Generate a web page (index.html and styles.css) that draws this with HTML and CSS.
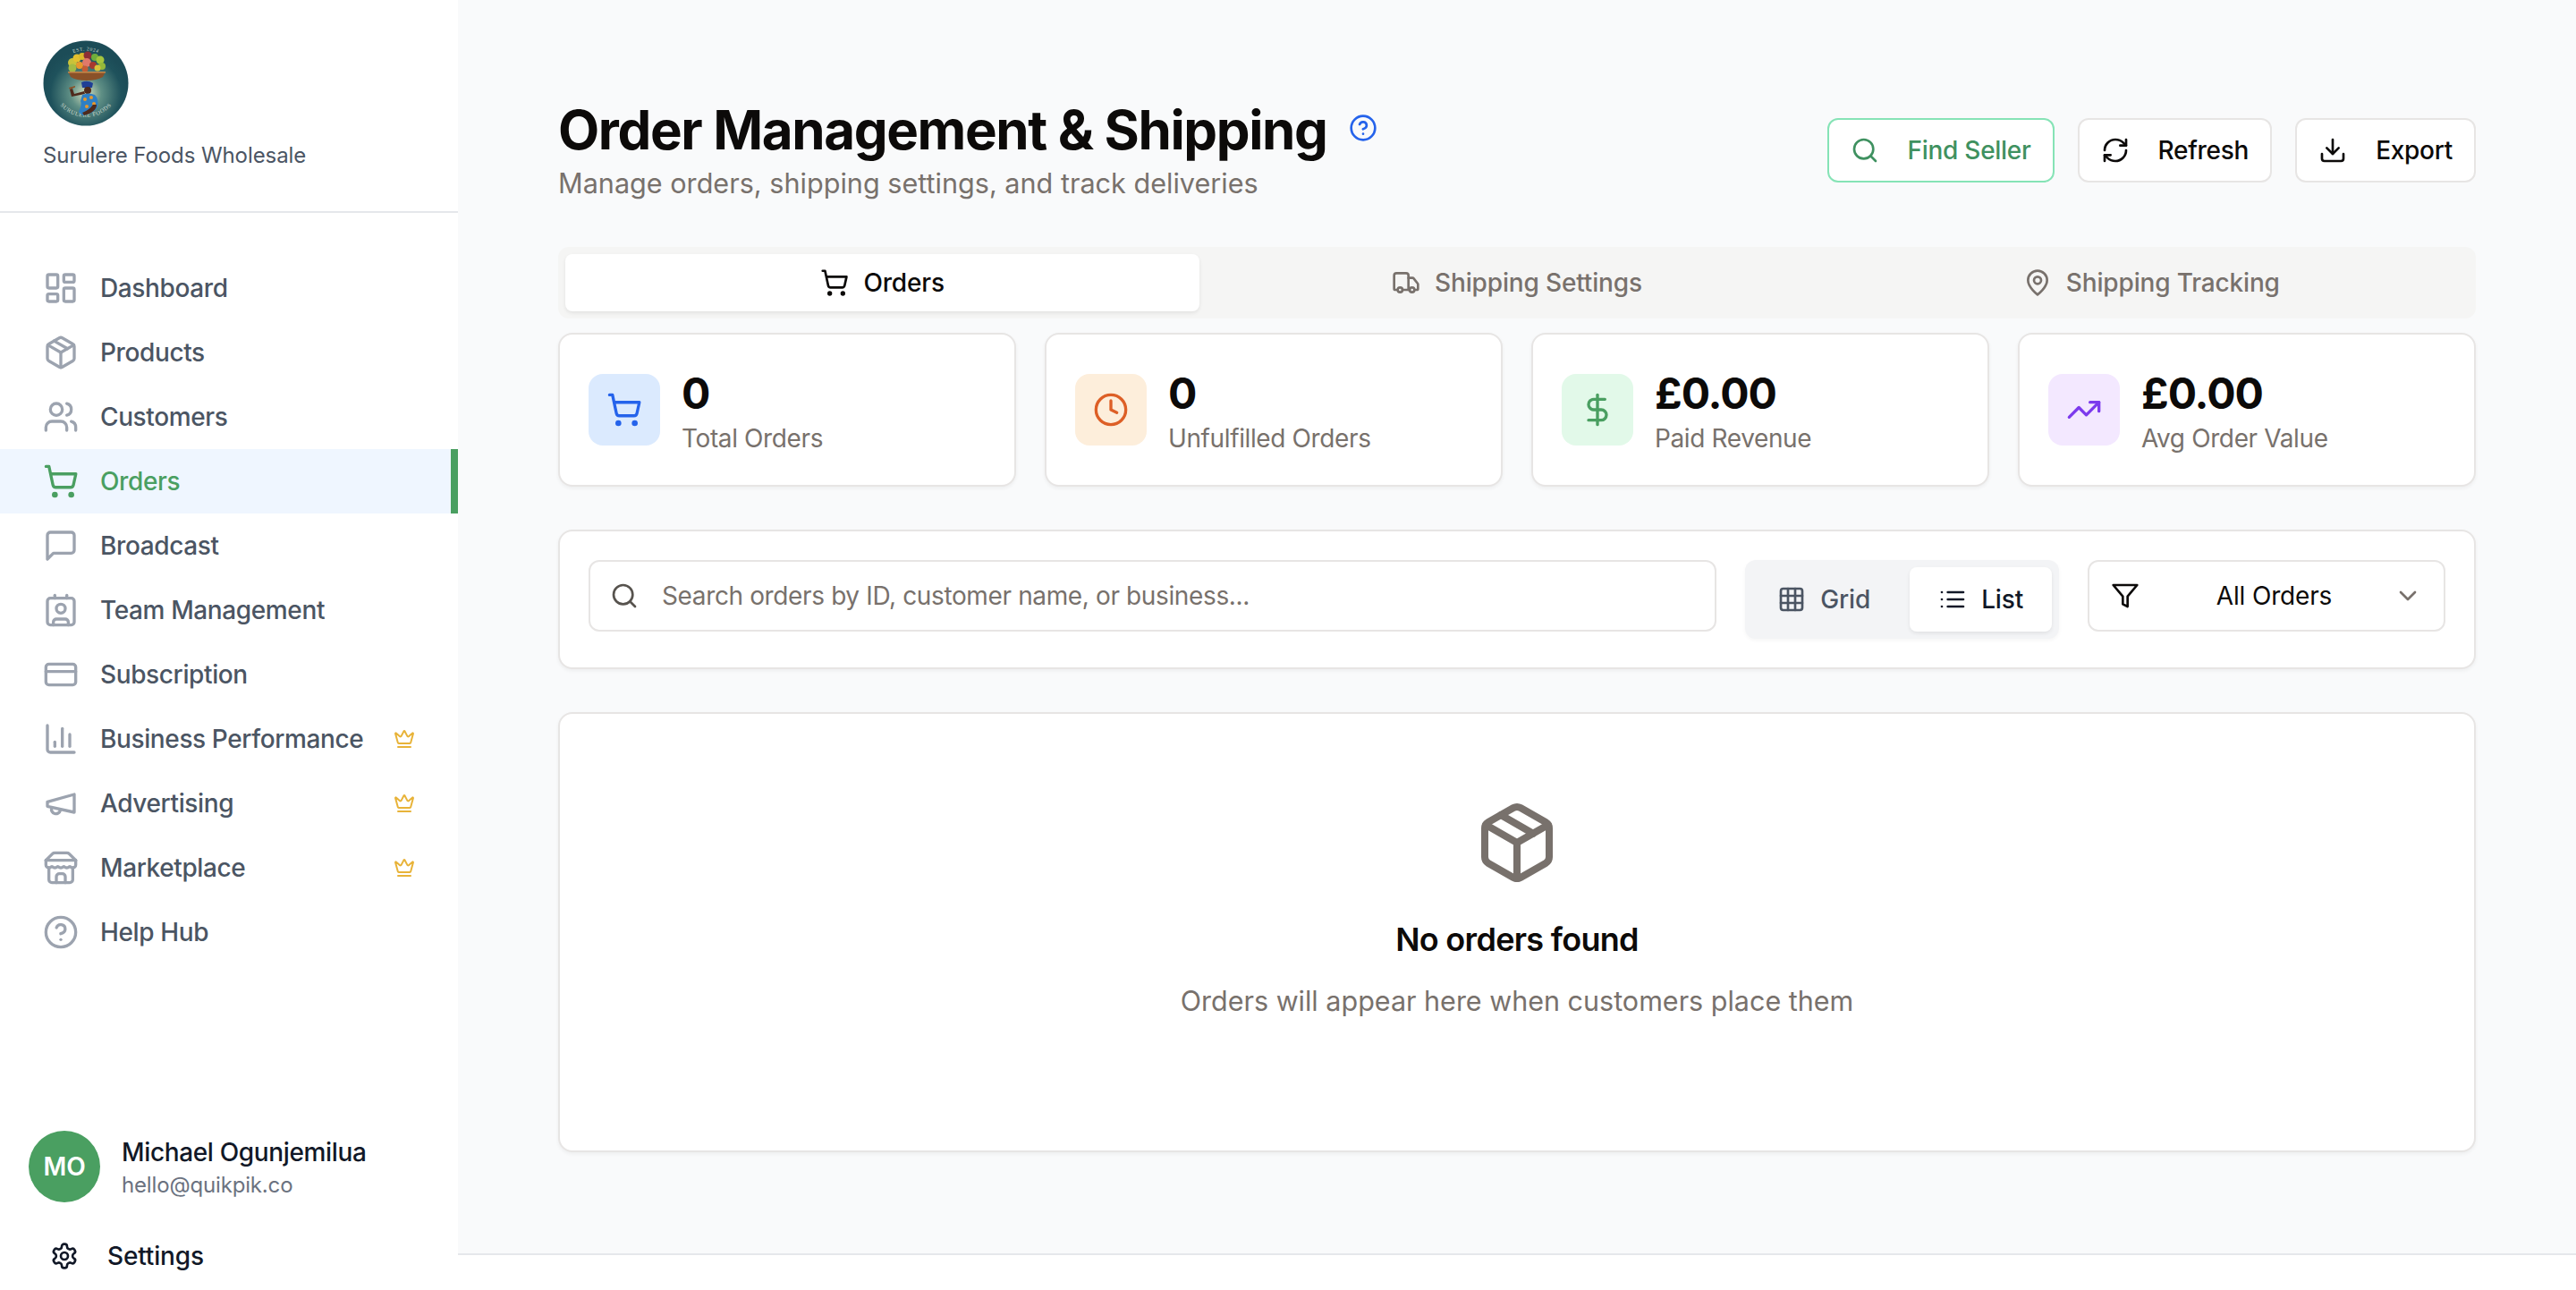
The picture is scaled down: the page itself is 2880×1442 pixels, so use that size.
FILE: index.html
```html
<!DOCTYPE html>
<html lang="en">
<head>
    <meta charset="UTF-8">
    <meta name="viewport" content="width=device-width, initial-scale=1.0">
    <title>Order Management &amp; Shipping</title>
    <link rel="stylesheet" href="styles.css">
</head>
<body>
    <!-- icon sprite -->
    <svg class="sprite" xmlns="http://www.w3.org/2000/svg">
        <symbol id="i-dashboard" viewBox="0 0 24 24"><rect x="3" y="3" width="7" height="9" rx="1"/><rect x="14" y="3" width="7" height="5" rx="1"/><rect x="14" y="12" width="7" height="9" rx="1"/><rect x="3" y="16" width="7" height="5" rx="1"/></symbol>
        <symbol id="i-package" viewBox="0 0 24 24"><path d="M11 21.73a2 2 0 0 0 2 0l7-4A2 2 0 0 0 21 16V8a2 2 0 0 0-1-1.73l-7-4a2 2 0 0 0-2 0l-7 4A2 2 0 0 0 3 8v8a2 2 0 0 0 1 1.73z"/><path d="M12 22V12"/><polyline points="3.29 7 12 12 20.71 7"/><path d="m7.5 4.27 9 5.15"/></symbol>
        <symbol id="i-users" viewBox="0 0 24 24"><path d="M16 21v-2a4 4 0 0 0-4-4H6a4 4 0 0 0-4 4v2"/><circle cx="9" cy="7" r="4"/><path d="M22 21v-2a4 4 0 0 0-3-3.87"/><path d="M16 3.13a4 4 0 0 1 0 7.75"/></symbol>
        <symbol id="i-cart" viewBox="0 0 24 24"><circle cx="8" cy="21" r="1"/><circle cx="19" cy="21" r="1"/><path d="M2.05 2.05h2l2.66 12.42a2 2 0 0 0 2 1.58h9.78a2 2 0 0 0 1.95-1.57l1.65-7.43H5.12"/></symbol>
        <symbol id="i-message" viewBox="0 0 24 24"><path d="M21 15a2 2 0 0 1-2 2H7l-4 4V5a2 2 0 0 1 2-2h14a2 2 0 0 1 2 2z"/></symbol>
        <symbol id="i-contact" viewBox="0 0 24 24"><path d="M16 2v2"/><path d="M7 22v-2a2 2 0 0 1 2-2h6a2 2 0 0 1 2 2v2"/><path d="M8 2v2"/><circle cx="12" cy="11" r="3"/><rect x="3" y="4" width="18" height="18" rx="2"/></symbol>
        <symbol id="i-card" viewBox="0 0 24 24"><rect x="2" y="5" width="20" height="14" rx="2"/><line x1="2" y1="10" x2="22" y2="10"/></symbol>
        <symbol id="i-chart" viewBox="0 0 24 24"><path d="M3 3v16a2 2 0 0 0 2 2h16"/><path d="M18 17V9"/><path d="M13 17V5"/><path d="M8 17v-3"/></symbol>
        <symbol id="i-megaphone" viewBox="0 0 24 24"><path d="m3 11 18-5v12L3 14v-3z"/><path d="M11.6 16.8a3 3 0 1 1-5.8-1.6"/></symbol>
        <symbol id="i-store" viewBox="0 0 24 24"><path d="m2 7 4.41-4.41A2 2 0 0 1 7.83 2h8.34a2 2 0 0 1 1.42.59L22 7"/><path d="M4 12v8a2 2 0 0 0 2 2h12a2 2 0 0 0 2-2v-8"/><path d="M15 22v-4a2 2 0 0 0-2-2h-2a2 2 0 0 0-2 2v4"/><path d="M2 7h20"/><path d="M22 7v3a2 2 0 0 1-2 2a2.7 2.7 0 0 1-1.59-.63.7.7 0 0 0-.82 0A2.7 2.7 0 0 1 16 12a2.7 2.7 0 0 1-1.59-.63.7.7 0 0 0-.82 0A2.7 2.7 0 0 1 12 12a2.7 2.7 0 0 1-1.59-.63.7.7 0 0 0-.82 0A2.7 2.7 0 0 1 8 12a2.7 2.7 0 0 1-1.59-.63.7.7 0 0 0-.82 0A2.7 2.7 0 0 1 4 12a2 2 0 0 1-2-2V7"/></symbol>
        <symbol id="i-help" viewBox="0 0 24 24"><circle cx="12" cy="12" r="10"/><path d="M9.09 9a3 3 0 0 1 5.83 1c0 2-3 3-3 3"/><path d="M12 17h.01"/></symbol>
        <symbol id="i-crown" viewBox="0 0 24 24"><path d="M11.562 3.266a.5.5 0 0 1 .876 0L15.39 8.87a1 1 0 0 0 1.516.294L21.183 5.5a.5.5 0 0 1 .798.519l-2.834 10.246a1 1 0 0 1-.956.734H5.81a1 1 0 0 1-.957-.734L2.02 6.02a.5.5 0 0 1 .798-.519l4.276 3.664a1 1 0 0 0 1.516-.294z"/><path d="M5 21h14"/></symbol>
        <symbol id="i-settings" viewBox="0 0 24 24"><path d="M12.22 2h-.44a2 2 0 0 0-2 2v.18a2 2 0 0 1-1 1.73l-.43.25a2 2 0 0 1-2 0l-.15-.08a2 2 0 0 0-2.73.73l-.22.38a2 2 0 0 0 .73 2.73l.15.1a2 2 0 0 1 1 1.72v.51a2 2 0 0 1-1 1.74l-.15.09a2 2 0 0 0-.73 2.73l.22.38a2 2 0 0 0 2.73.73l.15-.08a2 2 0 0 1 2 0l.43.25a2 2 0 0 1 1 1.73V20a2 2 0 0 0 2 2h.44a2 2 0 0 0 2-2v-.18a2 2 0 0 1 1-1.73l.43-.25a2 2 0 0 1 2 0l.15.08a2 2 0 0 0 2.73-.73l.22-.39a2 2 0 0 0-.73-2.73l-.15-.08a2 2 0 0 1-1-1.74v-.5a2 2 0 0 1 1-1.74l.15-.09a2 2 0 0 0 .73-2.73l-.22-.38a2 2 0 0 0-2.73-.73l-.15.08a2 2 0 0 1-2 0l-.43-.25a2 2 0 0 1-1-1.73V4a2 2 0 0 0-2-2z"/><circle cx="12" cy="12" r="3"/></symbol>
        <symbol id="i-truck" viewBox="0 0 24 24"><path d="M14 18V6a2 2 0 0 0-2-2H4a2 2 0 0 0-2 2v11a1 1 0 0 0 1 1h2"/><path d="M15 18H9"/><path d="M19 18h2a1 1 0 0 0 1-1v-3.65a1 1 0 0 0-.22-.624l-3.48-4.35A1 1 0 0 0 17.52 8H14"/><circle cx="17" cy="18" r="2"/><circle cx="7" cy="18" r="2"/></symbol>
        <symbol id="i-pin" viewBox="0 0 24 24"><path d="M20 10c0 6-8 12-8 12s-8-6-8-12a8 8 0 0 1 16 0Z"/><circle cx="12" cy="10" r="3"/></symbol>
        <symbol id="i-search" viewBox="0 0 24 24"><circle cx="11" cy="11" r="8"/><path d="m21 21-4.3-4.3"/></symbol>
        <symbol id="i-refresh" viewBox="0 0 24 24"><path d="M3 12a9 9 0 0 1 9-9 9.75 9.75 0 0 1 6.74 2.74L21 8"/><path d="M21 3v5h-5"/><path d="M21 12a9 9 0 0 1-9 9 9.75 9.75 0 0 1-6.74-2.74L3 16"/><path d="M8 16H3v5"/></symbol>
        <symbol id="i-download" viewBox="0 0 24 24"><path d="M21 15v4a2 2 0 0 1-2 2H5a2 2 0 0 1-2-2v-4"/><polyline points="7 10 12 15 17 10"/><line x1="12" y1="15" x2="12" y2="3"/></symbol>
        <symbol id="i-clock" viewBox="0 0 24 24"><circle cx="12" cy="12" r="10"/><polyline points="12 6 12 12 16 14"/></symbol>
        <symbol id="i-dollar" viewBox="0 0 24 24"><line x1="12" y1="2" x2="12" y2="22"/><path d="M17 5H9.5a3.5 3.5 0 0 0 0 7h5a3.5 3.5 0 0 1 0 7H6"/></symbol>
        <symbol id="i-trending" viewBox="0 0 24 24"><polyline points="22 7 13.5 15.5 8.5 10.5 2 17"/><polyline points="16 7 22 7 22 13"/></symbol>
        <symbol id="i-grid" viewBox="0 0 24 24"><rect x="3" y="3" width="18" height="18" rx="2"/><path d="M3 9h18"/><path d="M3 15h18"/><path d="M9 3v18"/><path d="M15 3v18"/></symbol>
        <symbol id="i-list" viewBox="0 0 24 24"><path d="M3 12h.01"/><path d="M3 18h.01"/><path d="M3 6h.01"/><path d="M8 12h13"/><path d="M8 18h13"/><path d="M8 6h13"/></symbol>
        <symbol id="i-filter" viewBox="0 0 24 24"><polygon points="22 3 2 3 10 12.46 10 19 14 21 14 12.46 22 3"/></symbol>
        <symbol id="i-chevron" viewBox="0 0 24 24"><path d="m6 9 6 6 6-6"/></symbol>
    </svg>

    <aside class="sidebar">
        <div class="brand">
            <!-- store logo, redrawn by hand -->
            <svg class="brand-logo" viewBox="0 0 96 96" xmlns="http://www.w3.org/2000/svg">
                <defs>
                    <radialGradient id="logoBg" cx="50%" cy="62%" r="52%">
                        <stop offset="0" stop-color="#d5dfc0"/>
                        <stop offset="0.35" stop-color="#5f8f85"/>
                        <stop offset="0.8" stop-color="#1f525c"/>
                        <stop offset="1" stop-color="#1c4c57"/>
                    </radialGradient>
                    <path id="logoTop" d="M22 24 A33 33 0 0 1 74 24"/>
                    <path id="logoBottom" d="M12 60 A38 38 0 0 0 84 60"/>
                </defs>
                <circle cx="48" cy="48" r="47.5" fill="url(#logoBg)"/>
                <text class="logo-text logo-text-top"><textPath href="#logoTop" startOffset="50%" text-anchor="middle">EST. 2024</textPath></text>
                <text class="logo-text"><textPath href="#logoBottom" startOffset="50%" text-anchor="middle">SURULERE FOODS</textPath></text>
                <circle cx="33" cy="25" r="5" fill="#c9c23a"/>
                <circle cx="38" cy="20" r="4.5" fill="#e3c02f"/>
                <circle cx="44" cy="18" r="4" fill="#d9b92a"/>
                <circle cx="50" cy="17" r="4.5" fill="#8d2f35"/>
                <circle cx="58" cy="19" r="4" fill="#6fae3c"/>
                <circle cx="64" cy="22" r="4.5" fill="#a5c53e"/>
                <circle cx="66" cy="29" r="4" fill="#94b83a"/>
                <circle cx="33" cy="31" r="4.5" fill="#a3bb45"/>
                <circle cx="41" cy="28" r="4" fill="#e8982b"/>
                <circle cx="49" cy="25" r="5" fill="#e0796a"/>
                <circle cx="56" cy="28" r="4" fill="#a8372f"/>
                <circle cx="61" cy="31" r="3.5" fill="#d9c23a"/>
                <circle cx="47" cy="32" r="3.5" fill="#c65c35"/>
                <path d="M28 35 H70 L67 41 Q60 45 49 45 Q37 45 31 41Z" fill="#8a5128"/>
                <path d="M28 35 H70 V36.5 H28Z" fill="#c58a4b"/>
                <path d="M43 47 Q50 44 56 48 L55 53 H44Z" fill="#1f3f96"/>
                <circle cx="50" cy="56" r="4" fill="#4f2a1c"/>
                <path d="M47 60 L32 63 L30 55 L33 54 L35 60 L46 57Z" fill="#4f2a1c"/>
                <path d="M29 53 L36 51 L36 52.5 L30 55Z" fill="#8a5128"/>
                <path d="M44 61 Q51 58 58 61 Q63 66 61 75 Q57 82 44 84 L40 80 Q44 72 42 68Z" fill="#2f7fc4"/>
                <circle cx="47" cy="66" r="2" fill="#e8982b"/>
                <circle cx="54" cy="64" r="2" fill="#e8982b"/>
                <circle cx="57" cy="71" r="2" fill="#e8982b"/>
                <circle cx="49" cy="74" r="2" fill="#e8982b"/>
                <path d="M60 72 Q60 80 46 84 L44 81 Q52 78 56 72Z" fill="#4f2a1c"/>
            </svg>
            <p class="brand-name">Surulere Foods Wholesale</p>
        </div>

        <nav class="nav">
            <a class="nav-item"><svg class="icon nav-icon"><use href="#i-dashboard"/></svg><span class="nav-label">Dashboard</span></a>
            <a class="nav-item"><svg class="icon nav-icon"><use href="#i-package"/></svg><span class="nav-label">Products</span></a>
            <a class="nav-item"><svg class="icon nav-icon"><use href="#i-users"/></svg><span class="nav-label">Customers</span></a>
            <a class="nav-item active"><svg class="icon nav-icon"><use href="#i-cart"/></svg><span class="nav-label">Orders</span></a>
            <a class="nav-item"><svg class="icon nav-icon"><use href="#i-message"/></svg><span class="nav-label">Broadcast</span></a>
            <a class="nav-item"><svg class="icon nav-icon"><use href="#i-contact"/></svg><span class="nav-label">Team Management</span></a>
            <a class="nav-item"><svg class="icon nav-icon"><use href="#i-card"/></svg><span class="nav-label">Subscription</span></a>
            <a class="nav-item"><svg class="icon nav-icon"><use href="#i-chart"/></svg><span class="nav-label">Business Performance</span><svg class="icon crown"><use href="#i-crown"/></svg></a>
            <a class="nav-item"><svg class="icon nav-icon"><use href="#i-megaphone"/></svg><span class="nav-label">Advertising</span><svg class="icon crown"><use href="#i-crown"/></svg></a>
            <a class="nav-item"><svg class="icon nav-icon"><use href="#i-store"/></svg><span class="nav-label">Marketplace</span><svg class="icon crown"><use href="#i-crown"/></svg></a>
            <a class="nav-item"><svg class="icon nav-icon"><use href="#i-help"/></svg><span class="nav-label">Help Hub</span></a>
        </nav>

        <div class="account">
            <div class="user">
                <div class="avatar">MO</div>
                <div>
                    <div class="user-name">Michael Ogunjemilua</div>
                    <div class="user-email">hello@quikpik.co</div>
                </div>
            </div>
            <a class="settings"><svg class="icon settings-icon"><use href="#i-settings"/></svg>Settings</a>
        </div>
    </aside>

    <div class="main">
        <main class="content">
            <header class="page-head">
                <div>
                    <div class="title-row">
                        <h1 class="title">Order Management &amp; Shipping</h1>
                        <svg class="icon title-help"><use href="#i-help"/></svg>
                    </div>
                    <p class="subtitle">Manage orders, shipping settings, and track deliveries</p>
                </div>
                <div class="head-actions">
                    <button class="btn btn-green"><svg class="icon"><use href="#i-search"/></svg>Find Seller</button>
                    <button class="btn"><svg class="icon"><use href="#i-refresh"/></svg>Refresh</button>
                    <button class="btn"><svg class="icon"><use href="#i-download"/></svg>Export</button>
                </div>
            </header>

            <div class="tabs">
                <div class="tab active"><svg class="icon"><use href="#i-cart"/></svg>Orders</div>
                <div class="tab"><svg class="icon"><use href="#i-truck"/></svg>Shipping Settings</div>
                <div class="tab"><svg class="icon"><use href="#i-pin"/></svg>Shipping Tracking</div>
            </div>

            <section class="stats">
                <div class="panel stat">
                    <div class="stat-icon blue"><svg class="icon"><use href="#i-cart"/></svg></div>
                    <div><div class="stat-value">0</div><div class="stat-label">Total Orders</div></div>
                </div>
                <div class="panel stat">
                    <div class="stat-icon orange"><svg class="icon"><use href="#i-clock"/></svg></div>
                    <div><div class="stat-value">0</div><div class="stat-label">Unfulfilled Orders</div></div>
                </div>
                <div class="panel stat">
                    <div class="stat-icon green"><svg class="icon"><use href="#i-dollar"/></svg></div>
                    <div><div class="stat-value">£0.00</div><div class="stat-label">Paid Revenue</div></div>
                </div>
                <div class="panel stat">
                    <div class="stat-icon purple"><svg class="icon"><use href="#i-trending"/></svg></div>
                    <div><div class="stat-value">£0.00</div><div class="stat-label">Avg Order Value</div></div>
                </div>
            </section>

            <section class="panel toolbar">
                <div class="search">
                    <svg class="icon search-icon"><use href="#i-search"/></svg>
                    <span class="search-text">Search orders by ID, customer name, or business...</span>
                </div>
                <div class="view-toggle">
                    <div class="view-btn"><svg class="icon"><use href="#i-grid"/></svg>Grid</div>
                    <div class="view-btn active"><svg class="icon"><use href="#i-list"/></svg>List</div>
                </div>
                <div class="select">
                    <svg class="icon"><use href="#i-filter"/></svg>
                    <span class="select-text">All Orders</span>
                    <svg class="icon select-chevron"><use href="#i-chevron"/></svg>
                </div>
            </section>

            <section class="panel empty">
                <svg class="icon empty-icon"><use href="#i-package"/></svg>
                <h2 class="empty-title">No orders found</h2>
                <p class="empty-text">Orders will appear here when customers place them</p>
            </section>
        </main>
        <footer class="page-foot"></footer>
    </div>
</body>
</html>
```

FILE: styles.css
```css
* {
    box-sizing: border-box;
}
html, body {
    height: 100%;
}
body {
    margin: 0;
    display: flex;
    overflow: hidden;
    font-family: Inter, "Noto Sans", sans-serif;
    letter-spacing: -0.01em;
    background: #f9fafb;
    color: #0c0a09;
}
p, h1, h2 {
    margin: 0;
}
.sprite {
    display: none;
}
.icon {
    width: 32px;
    height: 32px;
    flex: none;
    fill: none;
    stroke: currentColor;
    stroke-width: 2;
    stroke-linecap: round;
    stroke-linejoin: round;
}

/* sidebar */
.sidebar {
    width: 512px;
    flex: none;
    display: flex;
    flex-direction: column;
    background: #fff;
}
.brand {
    height: 238px;
    padding: 45px 48px 0;
    border-bottom: 2px solid #e5e7eb;
}
.brand-logo {
    display: block;
    width: 96px;
    height: 96px;
}
.brand-name {
    margin-top: 17px;
    font-size: 24px;
    line-height: 32px;
    letter-spacing: -0.08px;
    color: #4b5563;
}
.logo-text {
    font-family: "Liberation Serif", serif;
    font-size: 6.5px;
    letter-spacing: 0.6px;
    fill: #cfdcd0;
}
.logo-text-top {
    font-size: 5.5px;
}
.nav {
    padding-top: 48px;
}
.nav-item {
    display: flex;
    align-items: center;
    gap: 24px;
    height: 72px;
    padding: 0 48px;
    font-size: 28px;
    font-weight: 500;
    letter-spacing: -0.38px;
    color: #4b5563;
}
.nav-icon {
    width: 40px;
    height: 40px;
    color: #9ca3af;
}
.nav-label {
    flex: 1;
}
.nav-item.active {
    background: #eff6ff;
    border-right: 8px solid #4a9f61;
    padding-right: 40px;
    color: #4a9f61;
}
.nav-item.active .nav-icon {
    color: #4a9f61;
}
.crown {
    width: 24px;
    height: 24px;
    color: #e8b339;
}
.account {
    margin-top: auto;
    padding: 0 32px 14px;
}
.user {
    display: flex;
    align-items: center;
    gap: 24px;
}
.avatar {
    width: 80px;
    height: 80px;
    flex: none;
    display: flex;
    align-items: center;
    justify-content: center;
    border-radius: 50%;
    background: #4a9f61;
    color: #fff;
    font-size: 28px;
    font-weight: 600;
}
.user-name {
    padding-top: 1px;
    font-size: 28px;
    line-height: 40px;
    font-weight: 500;
    letter-spacing: -0.35px;
    color: #111827;
}
.user-email {
    margin-top: 1px;
    font-size: 24px;
    line-height: 32px;
    color: #6b7280;
}
.settings {
    display: flex;
    align-items: center;
    gap: 32px;
    height: 48px;
    margin-top: 36px;
    padding-left: 24px;
    font-size: 28px;
    font-weight: 500;
    color: #111827;
}

/* main column */
.main {
    flex: 1;
    min-width: 0;
    display: flex;
    flex-direction: column;
}
.content {
    flex: 1;
    padding: 108px 112px 0;
}
.page-foot {
    height: 41px;
    background: #fff;
    border-top: 2px solid #e5e7eb;
}
.page-head {
    display: flex;
    align-items: center;
    justify-content: space-between;
    margin-bottom: 48px;
}
.title-row {
    display: flex;
    align-items: center;
    gap: 24px;
}
.title {
    padding-top: 1px;
    font-size: 60px;
    line-height: 72px;
    font-weight: 700;
    letter-spacing: -1.37px;
}
.title-help {
    margin-bottom: 4px;
    color: #2563eb;
}
.subtitle {
    font-size: 30.6px;
    line-height: 47px;
    letter-spacing: 0;
    color: #78716c;
}
.head-actions {
    display: flex;
    gap: 26px;
}
.btn {
    display: flex;
    align-items: center;
    gap: 32px;
    height: 72px;
    padding: 0 24px;
    border: 2px solid #e7e5e4;
    border-radius: 12px;
    background: #fff;
    font-family: inherit;
    font-size: 28px;
    font-weight: 500;
    letter-spacing: -0.01em;
    color: #0c0a09;
}
.btn-green {
    border-color: #86e3b6;
    color: #3f9160;
}

/* tabs */
.tabs {
    display: grid;
    grid-template-columns: repeat(3, 1fr);
    padding: 8px;
    margin-bottom: 16px;
    height: 80px;
    border-radius: 12px;
    background: #f5f5f4;
}
.tab {
    display: flex;
    align-items: center;
    justify-content: center;
    gap: 16px;
    border-radius: 8px;
    font-size: 28px;
    font-weight: 500;
    color: #78716c;
}
.tab.active {
    background: #fff;
    color: #0c0a09;
    box-shadow: 0 2px 4px rgba(0, 0, 0, 0.08);
}

/* cards */
.panel {
    border: 2px solid #e7e5e4;
    border-radius: 16px;
    background: #fff;
    box-shadow: 0 2px 4px rgba(0, 0, 0, 0.05);
}
.stats {
    display: grid;
    grid-template-columns: repeat(4, 1fr);
    gap: 32px;
    margin-bottom: 48px;
}
.stat {
    display: flex;
    align-items: center;
    gap: 24px;
    padding: 32px;
}
.stat-icon {
    width: 80px;
    height: 80px;
    flex: none;
    display: flex;
    align-items: center;
    justify-content: center;
    border-radius: 16px;
}
.stat-icon .icon {
    width: 40px;
    height: 40px;
}
.stat-icon.blue {
    background: #dbeafe;
    color: #2563eb;
}
.stat-icon.orange {
    background: #fdeedb;
    color: #dd5f26;
}
.stat-icon.green {
    background: #e2f9e9;
    color: #4a9f61;
}
.stat-icon.purple {
    background: #f3e8ff;
    color: #7c3aed;
}
.stat-value {
    padding-top: 3px;
    font-size: 48px;
    line-height: 61px;
    font-weight: 700;
    letter-spacing: -1px;
}
.stat-label {
    font-size: 28px;
    line-height: 40px;
    letter-spacing: -0.38px;
}
.stat-label, .empty-text {
    color: #78716c;
}

/* search and filters */
.toolbar {
    display: flex;
    align-items: flex-start;
    gap: 32px;
    padding: 32px;
    margin-bottom: 48px;
}
.search {
    flex: 1;
    display: flex;
    align-items: center;
    gap: 26px;
    height: 80px;
    padding: 0 22px;
    border: 2px solid #e7e5e4;
    border-radius: 12px;
    font-size: 28px;
    letter-spacing: -0.37px;
    color: #78716c;
}
.search-icon {
    color: #57534e;
}
.view-toggle {
    display: flex;
    gap: 16px;
    padding: 8px;
    border-radius: 12px;
    background: #f3f4f6;
    box-shadow: 0 2px 4px rgba(0, 0, 0, 0.04);
}
.view-btn {
    display: flex;
    align-items: center;
    gap: 16px;
    height: 72px;
    padding: 0 28px;
    border-radius: 8px;
    font-size: 28px;
    font-weight: 500;
    color: #4b5563;
}
.view-btn.active {
    padding: 0 32px;
    background: #fff;
    color: #111827;
    box-shadow: 0 2px 4px rgba(0, 0, 0, 0.08);
}
.select {
    width: 400px;
    height: 80px;
    flex: none;
    display: flex;
    align-items: center;
    justify-content: space-between;
    padding: 0 24px;
    border: 2px solid #e7e5e4;
    border-radius: 12px;
    font-size: 28px;
    color: #0c0a09;
}
.select-text {
    margin-left: 17px;
}
.select-chevron {
    color: #78716c;
}

/* empty state */
.empty {
    height: 492px;
    display: flex;
    flex-direction: column;
    align-items: center;
    padding-top: 96px;
}
.empty-icon {
    width: 96px;
    height: 96px;
    color: #78716c;
}
.empty-title {
    margin-top: 36px;
    font-size: 36px;
    line-height: 48px;
    font-weight: 600;
    letter-spacing: -0.7px;
}
.empty-text {
    margin-top: 21px;
    font-size: 30.5px;
    line-height: 48px;
    letter-spacing: 0;
}
```
